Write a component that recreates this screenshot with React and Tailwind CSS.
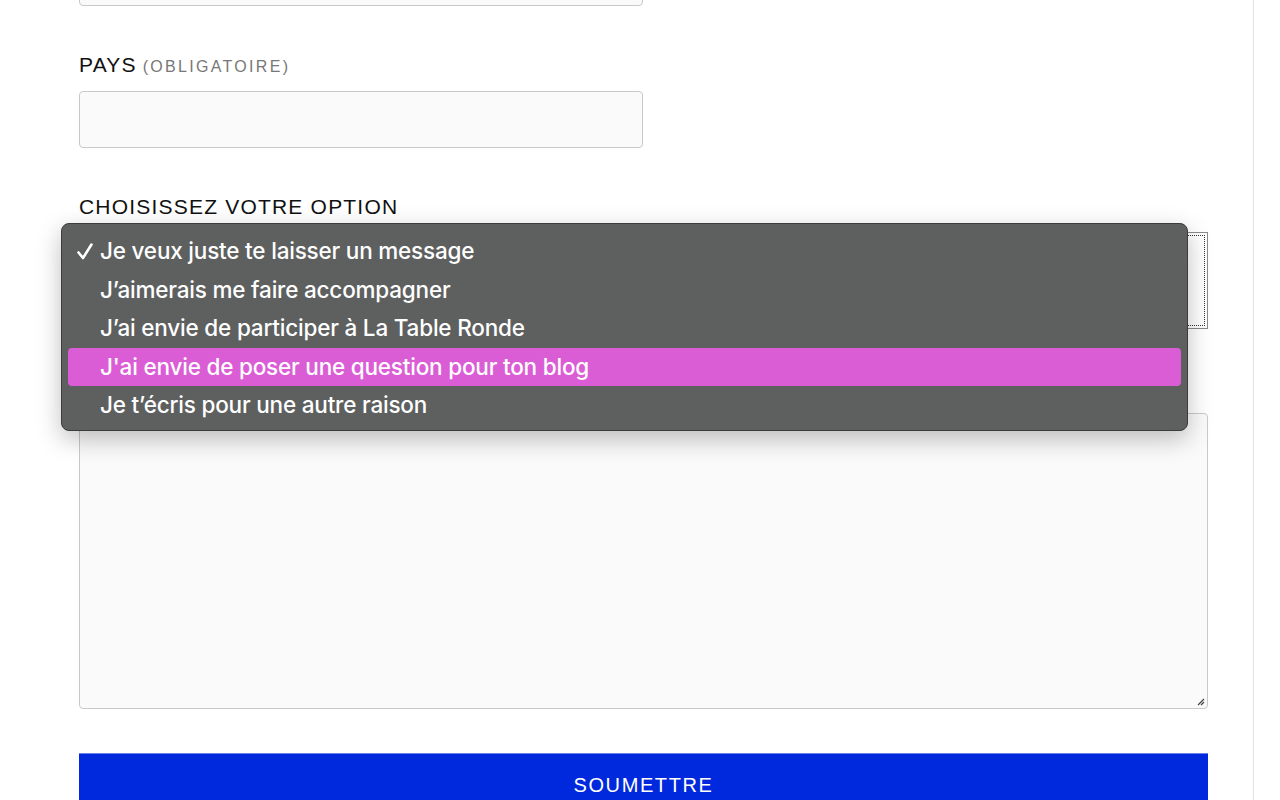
export default function App() {
  const options = [
    "Je veux juste te laisser un message",
    "J’aimerais me faire accompagner",
    "J’ai envie de participer à La Table Ronde",
    "J'ai envie de poser une question pour ton blog",
    "Je t’écris pour une autre raison",
  ];
  const label = "text-[21px] tracking-[1.2px] text-[#111] leading-none";
  return (
    <div className="h-[800px] overflow-hidden bg-white flow-root" style={{ fontFamily: '"Liberation Sans", Arial, sans-serif' }}>
      <div className="relative flow-root w-[1254px] h-[850px] -mt-[50px] border-r border-[#e2e2e2] pl-[79px] pr-[45px]">
        <div className="w-[564px] h-[56px] rounded-[4px] border border-[#c9c9c9] bg-[#fafafa]" />
        <div className="mt-[48px] flex items-baseline gap-[6px]">
          <span className={label}>PAYS</span>
          <span className="text-[16px] tracking-[2.3px] text-[#777] leading-none">(OBLIGATOIRE)</span>
        </div>
        <div className="mt-[16px] w-[564px] h-[57px] rounded-[4px] border border-[#c9c9c9] bg-[#fafafa]" />
        <div className={"mt-[48px] " + label}>CHOISISSEZ VOTRE OPTION</div>
        <div className="mt-[15px] h-[97px] border border-[#8a8a8a] bg-white p-[2px]">
          <div className="h-full border-[1.5px] border-dotted border-[#333]" />
        </div>
        <div className={"mt-[36px] h-[20px] " + label}>MESSAGE</div>
        <div className="mt-[28px] relative h-[296px] rounded-[4px] border border-[#c9c9c9] bg-[#fafafa]">
          <svg className="absolute right-[2px] bottom-[2px]" width="10" height="10" viewBox="0 0 10 10">
            <path d="M9 3 L3 9 M9 6 L6 9" stroke="#444" strokeWidth="1.2" />
          </svg>
        </div>
        <div className="mt-[44px] h-[60px] bg-[#0029dd] border-t border-[#6a7fe8] flex justify-center pt-[21px]">
          <span className="text-white text-[20px] tracking-[1.6px] leading-none">SOUMETTRE</span>
        </div>

        <div
          className="absolute left-[61px] top-[273px] w-[1127px] h-[208px] rounded-[8px] border border-[#3b3c3c] bg-[#5e6060] shadow-[0_8px_24px_rgba(0,0,0,0.25)] px-[6px] pt-[8px]"
          style={{ fontFamily: 'Inter, "Open Sans", sans-serif' }}
        >
          {options.map((o, i) => (
            <div
              key={i}
              className={
                "relative h-[38.5px] flex items-center pl-[32px] rounded-[4px] text-[22.5px] font-medium tracking-[-0.2px] text-white " +
                (i === 3 ? "bg-[#db5dd6]" : "")
              }
            >
              {i === 0 && (
                <svg className="absolute left-[9px] top-[11px]" width="16" height="17" viewBox="0 0 16 17">
                  <path d="M1.5 9.5 L6 15 L14.5 1.5" fill="none" stroke="white" strokeWidth="2.6" strokeLinecap="round" strokeLinejoin="round" />
                </svg>
              )}
              {o}
            </div>
          ))}
        </div>
      </div>
    </div>
  );
}
